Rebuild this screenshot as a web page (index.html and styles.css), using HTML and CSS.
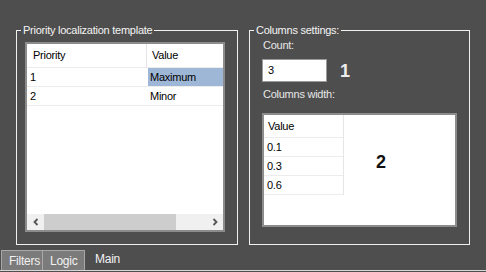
FILE: index.html
```html
<!DOCTYPE html>
<html>
<head>
<meta charset="utf-8">
<link rel="stylesheet" href="styles.css">
</head>
<body>
<div class="window">
  <div class="panels">
    <fieldset class="group group-left">
      <legend>Priority localization template</legend>
      <div class="listbox listbox-left">
        <div class="grid">
          <div class="row head">
            <div class="cell c-prio">Priority</div>
            <div class="cell c-val">Value</div>
          </div>
          <div class="row">
            <div class="cell c-prio">1</div>
            <div class="cell c-val selected">Maximum</div>
          </div>
          <div class="row">
            <div class="cell c-prio">2</div>
            <div class="cell c-val">Minor</div>
          </div>
        </div>
        <div class="hscroll">
          <div class="arrow">
            <svg width="8" height="8" viewBox="0 0 8 8"><path d="M5.5 1 L2.5 4 L5.5 7" fill="none" stroke="#555" stroke-width="1.8"/></svg>
          </div>
          <div class="thumb"></div>
          <div class="track-rest"></div>
          <div class="arrow">
            <svg width="8" height="8" viewBox="0 0 8 8"><path d="M2.5 1 L5.5 4 L2.5 7" fill="none" stroke="#555" stroke-width="1.8"/></svg>
          </div>
        </div>
      </div>
    </fieldset>
    <fieldset class="group group-right">
      <legend>Columns settings:</legend>
      <div class="label label-count">Count:</div>
      <div class="count-row">
        <div class="input">3</div>
        <div class="callout callout-light">1</div>
      </div>
      <div class="label label-width">Columns width:</div>
      <div class="listbox listbox-right">
        <div class="col-grid">
          <div class="wrow whead">Value</div>
          <div class="wrow">0.1</div>
          <div class="wrow">0.3</div>
          <div class="wrow">0.6</div>
        </div>
        <div class="empty-area">
          <div class="callout callout-dark">2</div>
        </div>
      </div>
    </fieldset>
  </div>
  <div class="tabs">
    <div class="tab">Filters</div>
    <div class="tab">Logic</div>
    <div class="tab tab-active">Main</div>
  </div>
</div>
</body>
</html>
```
FILE: styles.css
```css
* { box-sizing: border-box; }
html, body {
  margin: 0;
  padding: 0;
  width: 486px;
  height: 272px;
  overflow: hidden;
  background: #4e4e4e;
  font-family: "Liberation Sans", Arial, sans-serif;
  font-size: 11px;
  letter-spacing: -0.25px;
}
.window {
  width: 486px;
  height: 272px;
  display: flex;
  flex-direction: column;
}
.panels {
  display: flex;
  padding: 24px 0 0 16px;
  gap: 11px;
  height: 245px;
}
.group {
  margin: 0;
  padding: 5px 0 0 0;
  border: 1px solid #f0f0f0;
  height: 221px;
  min-width: 0;
}
.group legend {
  margin-left: 4px;
  padding: 0 2px;
  color: #f4f4f4;
  line-height: 13px;
  height: 13px;
}
.group-left { width: 222px; }
.group-right { width: 221px; padding-top: 0; }

.listbox {
  background: #fff;
  border: 2px solid #8c8c8c;
  color: #000;
}
.listbox-left {
  margin-left: 8px;
  width: 200px;
  height: 190px;
  display: flex;
  flex-direction: column;
}
.grid { flex: 1; }
.row {
  display: flex;
  height: 19px;
  border-bottom: 1px solid #ececec;
}
.row.head { height: 24px; }
.cell {
  line-height: 18px;
  white-space: nowrap;
}
.head .cell { line-height: 23px; }
.c-prio {
  width: 120px;
  padding-left: 3px;
}
.head .c-prio { padding-left: 6px; border-right: 1px solid #e4e4e4; }
.c-val {
  flex: 1;
  padding-left: 2px;
}
.head .c-val { padding-left: 5px; }
.row:not(.head) .c-val { margin-left: 1px; }
.selected { background: #9fb7d7; }

.hscroll {
  height: 16px;
  display: flex;
  background: #f0f0f0;
}
.arrow {
  width: 17px;
  display: flex;
  align-items: center;
  justify-content: center;
}
.thumb {
  width: 132px;
  background: #cdcdcd;
}
.track-rest { flex: 1; }

.label {
  color: #e8e8e8;
  line-height: 13px;
  margin-left: 13px;
}
.label-count { margin-top: 2px; }
.count-row {
  display: flex;
  align-items: center;
  gap: 13px;
  margin: 7px 0 0 12px;
}
.input {
  width: 65px;
  height: 23px;
  background: #fff;
  border: 1px solid #9a9a9a;
  color: #000;
  padding-left: 5px;
  line-height: 21px;
}
.callout {
  font-size: 18px;
  font-weight: bold;
  line-height: 20px;
  letter-spacing: 0;
}
.callout-light { color: #ececec; }
.callout-dark { color: #111; }
.label-width { margin-top: 6px; }
.listbox-right {
  margin: 12px 0 0 12px;
  width: 195px;
  height: 114px;
  display: flex;
}
.col-grid {
  width: 80px;
  align-self: flex-start;
  border-right: 1px solid #e6e6e6;
}
.wrow {
  height: 19px;
  line-height: 18px;
  padding-left: 3px;
  border-bottom: 1px solid #ececec;
}
.wrow.whead {
  height: 23px;
  line-height: 22px;
  padding-left: 4px;
}
.empty-area {
  flex: 1;
  padding: 37px 0 0 32px;
}

.tabs {
  display: flex;
  margin-top: 5px;
  padding-left: 1px;
  height: 21px;
  border-bottom: 1px solid #d6d6d6;
}
.tab {
  height: 20px;
  line-height: 20px;
  padding: 0 7px;
  color: #f2f2f2;
  font-size: 12px;
  background: #7b7b7b;
  border: 1px solid #a8a8a8;
  border-bottom: none;
}
.tab + .tab { border-left: none; }
.tab:nth-child(1) { width: 42px; }
.tab:nth-child(2) { width: 42px; text-align: center; }
.tab-active {
  background: transparent;
  border: none;
  padding-left: 10px;
  line-height: 18px;
}
```
